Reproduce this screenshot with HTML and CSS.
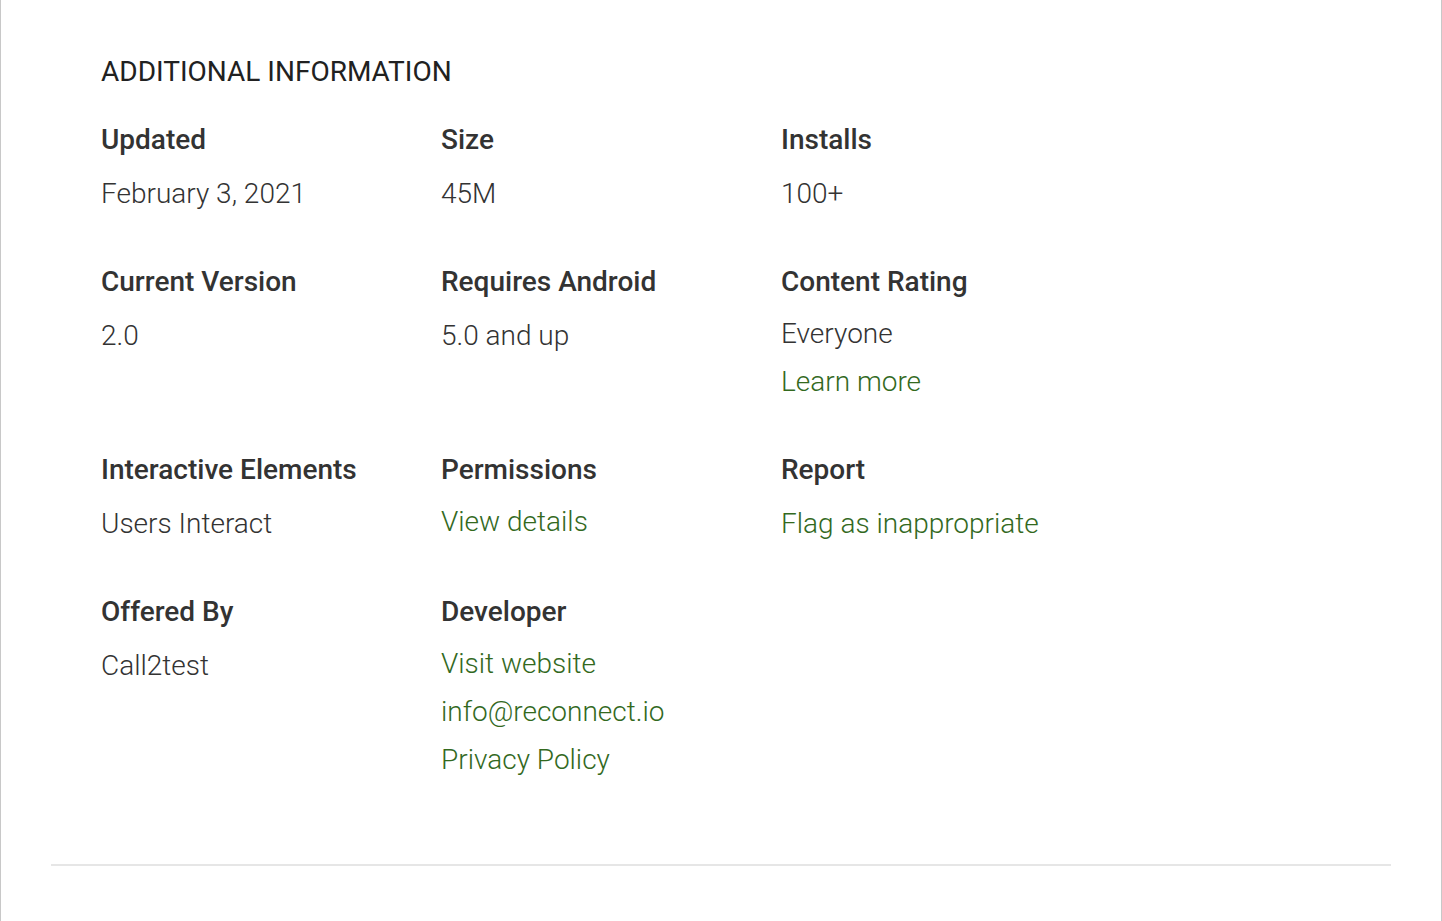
FILE: index.html
```html
<!DOCTYPE html>
<html>
<head>
<meta charset="utf-8">
<link rel="stylesheet" href="styles.css">
</head>
<body>
<div class="card">
  <section class="info">
    <h2 class="heading">ADDITIONAL INFORMATION</h2>
    <div class="grid">
      <div class="item">
        <div class="label">Updated</div>
        <div class="value">February 3, 2021</div>
      </div>
      <div class="item">
        <div class="label">Size</div>
        <div class="value">45M</div>
      </div>
      <div class="item">
        <div class="label">Installs</div>
        <div class="value">100+</div>
      </div>

      <div class="item">
        <div class="label">Current Version</div>
        <div class="value">2.0</div>
      </div>
      <div class="item">
        <div class="label">Requires Android</div>
        <div class="value">5.0 and up</div>
      </div>
      <div class="item">
        <div class="label">Content Rating</div>
        <div class="value nested">
          <div>Everyone</div>
          <div><a class="link" href="#">Learn more</a></div>
        </div>
      </div>

      <div class="item">
        <div class="label">Interactive Elements</div>
        <div class="value">Users Interact</div>
      </div>
      <div class="item">
        <div class="label">Permissions</div>
        <div class="value nested">
          <div><a class="link" href="#">View details</a></div>
        </div>
      </div>
      <div class="item">
        <div class="label">Report</div>
        <div class="value"><a class="link" href="#">Flag as inappropriate</a></div>
      </div>

      <div class="item">
        <div class="label">Offered By</div>
        <div class="value">Call2test</div>
      </div>
      <div class="item">
        <div class="label">Developer</div>
        <div class="value nested">
          <div><a class="link" href="#">Visit website</a></div>
          <div><a class="link" href="#">info@reconnect.io</a></div>
          <div><a class="link" href="#">Privacy Policy</a></div>
        </div>
      </div>
    </div>
  </section>
  <hr class="divider">
</div>
</body>
</html>
```

FILE: styles.css
```css
html, body {
  margin: 0;
  padding: 0;
  background: #fff;
}

body {
  font-family: Roboto, "Liberation Sans", sans-serif;
  color: #333;
}

.card {
  box-sizing: border-box;
  width: 1442px;
  min-height: 921px;
  border-left: 1px solid #c8c8c8;
  border-right: 1px solid #c8c8c8;
  padding: 52px 50px 0 50px;
}

.info {
  padding: 0 51px 0 50px;
}

.heading {
  margin: 0;
  font-size: 28px;
  line-height: 40px;
  font-weight: 400;
  color: #212121;
}

.grid {
  display: grid;
  grid-template-columns: repeat(3, 340px);
  row-gap: 44px;
  margin-top: 28px;
}

.label {
  font-size: 28px;
  line-height: 40px;
  font-weight: 500;
  color: #333;
}

.value {
  margin-top: 8px;
  padding-top: 2px;
  font-size: 28px;
  line-height: 48px;
  font-weight: 300;
  color: #333;
}

.value.nested {
  padding-top: 0;
}

.link {
  color: #33691e;
  text-decoration: none;
}

.divider {
  margin: 80px 0 0 0;
  border: 0;
  height: 2px;
  background: #e6e6e6;
}
```
